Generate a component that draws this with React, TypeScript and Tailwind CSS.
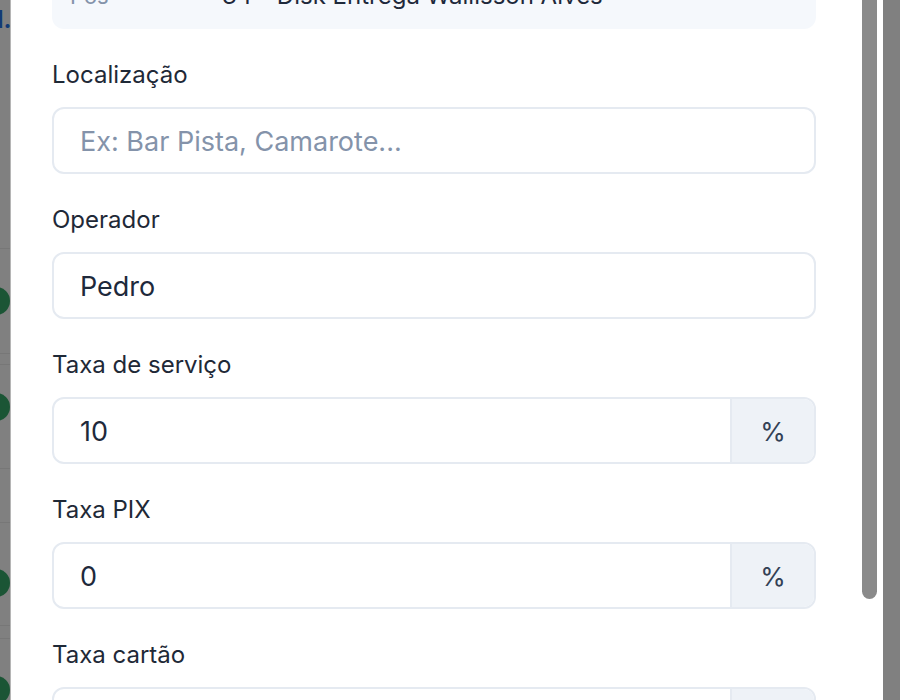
import React from "react"

const font = { fontFamily: "Inter, 'Noto Sans', sans-serif" }

function Field({ label, value, placeholder, suffix }: { label: string; value?: string; placeholder?: string; suffix?: string }) {
  return (
    <div className="flex shrink-0 flex-col">
      <label className="h-[28px] text-[24px] leading-[28px] font-normal text-[#1f2937]">{label}</label>
      <div className="mt-[18px] flex h-[67px] shrink-0 overflow-hidden rounded-[12px] border-2 border-[#e5eaf1] bg-white">
        <div className="flex flex-1 items-center px-[26px] pt-[3px]">
          {value ? (
            <span className="text-[27px] text-[#1e293b]">{value}</span>
          ) : (
            <span className="text-[27px] text-[#8493aa]">{placeholder}</span>
          )}
        </div>
        {suffix && (
          <div className="flex w-[84px] items-center justify-center border-l-2 border-[#e5eaf1] bg-[#eef2f7] pt-[2px] text-[26px] text-[#334155]">
            {suffix}
          </div>
        )}
      </div>
    </div>
  )
}

export default function App() {
  return (
    <div className="flex h-[700px] w-[900px] overflow-hidden bg-[#808080]" style={font}>
      {/* page behind the backdrop */}
      <div className="flex w-[10px] shrink-0 flex-col overflow-hidden">
        <div className="h-[248px] shrink-0 pt-[4px]">
          <span className="-ml-[3px] block text-[24px] font-bold leading-[32px] text-[#123a75]">l.</span>
        </div>
        <div className="flex h-[105px] shrink-0 items-center border-t border-[#777]">
          <div className="-ml-[18px] h-[28px] w-[28px] shrink-0 rounded-full bg-[#1b5535]" />
        </div>
        <div className="h-[11px] shrink-0 border-t border-[#777]" />
        <div className="flex h-[104px] shrink-0 items-start border-t border-[#777]">
          <div className="-ml-[18px] mt-[28px] h-[28px] w-[28px] shrink-0 rounded-full bg-[#1b5535]" />
        </div>
        <div className="h-[54px] shrink-0 border-t border-[#777]" />
        <div className="flex h-[103px] shrink-0 items-start border-t border-[#777]">
          <div className="-ml-[18px] mt-[46px] h-[28px] w-[28px] shrink-0 rounded-full bg-[#1b5535]" />
        </div>
        <div className="h-[13px] shrink-0 border-t border-[#777]" />
        <div className="flex h-[62px] shrink-0 items-start border-t border-[#777]">
          <div className="-ml-[18px] mt-[37px] h-[28px] w-[28px] shrink-0 rounded-full bg-[#1b5535]" />
        </div>
      </div>

      {/* modal */}
      <div className="flex w-[873px] shrink-0 border-l border-[#b5b5b5] bg-white">
        <div className="flex w-[850px] shrink-0 flex-col pl-[41px] pr-[45px]">
          <div className="-mt-[36px] flex h-[65px] shrink-0 items-start rounded-[12px] bg-[#f5f8fc] px-[18px] pt-[16px]">
            <span className="w-[152px] text-[22px] leading-[32px] text-[#8493aa]">Pos</span>
            <span className="text-[24px] leading-[32px] text-[#1e293b]">34 - Disk Entrega Wallisson Alves</span>
          </div>
          <div className="mt-[32px] flex shrink-0 flex-col gap-[32px]">
            <Field label="Localização" placeholder="Ex: Bar Pista, Camarote..." />
            <Field label="Operador" value="Pedro" />
            <Field label="Taxa de serviço" value="10" suffix="%" />
            <Field label="Taxa PIX" value="0" suffix="%" />
            <Field label="Taxa cartão" value="0" suffix="%" />
          </div>
        </div>
        <div className="flex w-[22px] shrink-0 pl-[1px]">
          <div className="h-[599px] w-[15px] shrink-0 rounded-b-[8px] bg-[#8a8a8a]" />
        </div>
      </div>
    </div>
  )
}
